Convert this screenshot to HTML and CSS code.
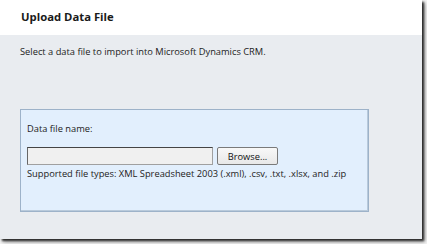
FILE: index.html
```html
<!DOCTYPE html>
<html lang="en">
<head>
    <meta charset="UTF-8">
    <title>Upload Data File</title>
    <link rel="stylesheet" href="styles.css">
</head>
<body>
    <div class="frame">
        <div class="header">
            <h1>Upload Data File</h1>
        </div>

        <div class="content">
            <p class="intro">Select a data file to import into Microsoft Dynamics CRM.</p>

            <div class="upload-box">
                <label for="dataFile">Data file name:</label>
                <div class="file-row">
                    <input type="text" id="dataFile" class="file-input">
                    <button type="button" class="btn-browse">Browse...</button>
                </div>
                <p class="hint">Supported file types: XML Spreadsheet 2003 (.xml), .csv, .txt, .xlsx, and .zip</p>
            </div>
        </div>
    </div>
</body>
</html>
```

FILE: styles.css
```css
* {
    margin: 0;
    padding: 0;
    box-sizing: border-box;
}

body {
    font-family: 'Open Sans', 'Noto Sans', sans-serif;
    background: #f4f4f4;
    width: 427px;
    height: 244px;
    overflow: hidden;
}

.frame {
    width: 422px;
    height: 239px;
    background: #e9ecf0;
    box-shadow: 2px 2px 2px rgba(0, 0, 0, 0.75), 3px 3px 4px rgba(0, 0, 0, 0.35);
    display: flex;
    flex-direction: column;
}

.header {
    background: #fff;
    height: 35px;
    padding: 9px 0 0 21px;
}

.header h1 {
    font-size: 11.3px;
    font-weight: 700;
    color: #1a1a1a;
}

.content {
    padding: 10px 0 0 20px;
}

.intro {
    font-size: 9.3px;
    color: #222;
}

.upload-box {
    margin-top: 51px;
    width: 349px;
    height: 103px;
    background: #e2effd;
    border: 1px solid #9db2c9;
    box-shadow: inset -1px -1px 0 #b9cadb;
    padding: 12px 0 0 6px;
}

label {
    display: block;
    font-size: 9.3px;
    color: #222;
}

.file-row {
    display: flex;
    gap: 4px;
    margin-top: 12px;
}

.file-input {
    width: 186px;
    height: 18px;
    background: #f0f0f0;
    border: 1px solid #a0a0a0;
    border-top-color: #444;
    border-left-color: #666;
}

.btn-browse {
    width: 61px;
    height: 18px;
    font-family: inherit;
    font-size: 9.3px;
    color: #111;
    background: linear-gradient(#f8f8f8, #e8e8e8);
    border: 1px solid #7a7a7a;
    border-radius: 2px;
}

.hint {
    margin-top: 2px;
    font-size: 9.3px;
    color: #222;
    white-space: nowrap;
}
```
